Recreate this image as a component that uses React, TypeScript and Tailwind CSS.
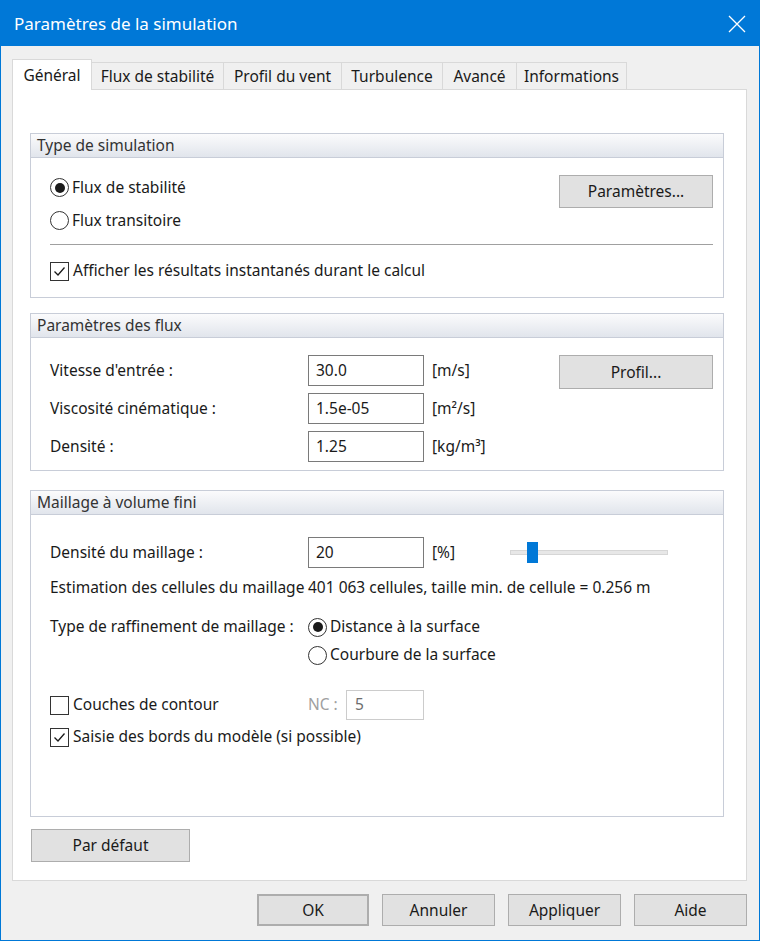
import { ReactNode } from "react";

function Radio({ checked, label }: { checked?: boolean; label: string }) {
  return (
    <div className="flex items-center gap-[3px]">
      <span className="w-[19px] h-[19px] rounded-full border border-[#333] flex items-center justify-center bg-white">
        {checked && <span className="w-[10px] h-[10px] rounded-full bg-[#1a1a1a]" />}
      </span>
      <span>{label}</span>
    </div>
  );
}

function Check({ checked, label }: { checked?: boolean; label: string }) {
  return (
    <div className="flex items-center gap-[4px]">
      <span className="w-[19px] h-[19px] border border-[#333] bg-white flex items-center justify-center">
        {checked && (
          <svg width="15" height="15" viewBox="0 0 15 15">
            <path d="M2.5 7.5 L6 11 L12.5 3.5" fill="none" stroke="#1a1a1a" strokeWidth="1.3" />
          </svg>
        )}
      </span>
      <span>{label}</span>
    </div>
  );
}

function Btn({ children, className = "" }: { children: ReactNode; className?: string }) {
  return (
    <button className={"bg-[#e1e1e1] border border-[#adadad] text-[#1a1a1a] flex items-center justify-center pt-px " + className}>
      {children}
    </button>
  );
}

function Group({ title, children, className = "" }: { title: string; children: ReactNode; className?: string }) {
  return (
    <div className={"border border-[#c8cdd8] " + className}>
      <div className="h-[24px] bg-gradient-to-b from-[#fbfbfc] to-[#e1e5ec] border-b border-[#c8cdd8] pl-[6px] leading-[23px] text-[#333]">
        {title}
      </div>
      {children}
    </div>
  );
}

function Field({ value }: { value: string }) {
  return (
    <div className="w-[116px] h-[31px] border border-[#7a7a7a] bg-white pl-[7px] flex items-center">{value}</div>
  );
}

const tabs = [
  { name: "Général", w: "w-[80px]" },
  { name: "Flux de stabilité", w: "w-[133px]" },
  { name: "Profil du vent", w: "w-[119px]" },
  { name: "Turbulence", w: "w-[102px]" },
  { name: "Avancé", w: "w-[75px]" },
  { name: "Informations", w: "w-[111px]" },
];

export default function App() {
  return (
    <div
      className="w-[760px] h-[941px] border border-[#0078d7] bg-[#f0f0f0] flex flex-col text-[15.5px] text-[#1a1a1a]"
      style={{ fontFamily: '"Noto Sans", sans-serif' }}
    >
      <div className="h-[46px] bg-[#0078d7] text-white text-[17px] flex items-center justify-between pl-[13px] pr-[13px]">
        <span>Paramètres de la simulation</span>
        <svg width="18" height="18" viewBox="0 0 18 18">
          <path d="M1 1 L17 17 M17 1 L1 17" stroke="white" strokeWidth="1.3" />
        </svg>
      </div>

      <div className="flex-1 flex flex-col pl-[11px] pr-[12px] pt-[13px] pb-[14px]">
        <div className="flex items-end h-[30px]">
          {tabs.map((t, i) =>
            i === 0 ? (
              <div
                key={t.name}
                className={t.w + " h-[31px] bg-white border border-[#d9d9d9] border-b-0 flex items-center justify-center pt-[2px] relative z-10 -mb-px"}
              >
                {t.name}
              </div>
            ) : (
              <div
                key={t.name}
                className={t.w + " h-[27px] bg-[#f0f0f0] border border-[#d9d9d9] border-b-0 -ml-px flex items-center justify-center pt-[2px]"}
              >
                {t.name}
              </div>
            )
          )}
        </div>

        <div className="h-[792px] bg-white border border-[#d9d9d9] pl-[17px] pr-[22px] pt-[43px] flex flex-col">
          <Group title="Type de simulation">
            <div className="pl-[19px] pr-[10px] pt-[13px] pb-[13px]">
              <div className="flex justify-between items-start">
                <div className="flex flex-col">
                  <div className="h-[33px] flex items-center">
                    <Radio checked label="Flux de stabilité" />
                  </div>
                  <div className="h-[33px] flex items-center">
                    <Radio label="Flux transitoire" />
                  </div>
                </div>
                <Btn className="w-[154px] h-[33px] mt-[4px]">Paramètres...</Btn>
              </div>
              <div className="h-px bg-[#a0a0a0] mt-[7px]" />
              <div className="h-[26px] mt-[13px] flex items-center">
                <Check checked label="Afficher les résultats instantanés durant le calcul" />
              </div>
            </div>
          </Group>

          <Group title="Paramètres des flux" className="mt-[15px]">
            <div className="pl-[19px] pr-[10px] pt-[17px] pb-[8px] flex justify-between items-start">
              <div className="flex flex-col gap-[7px]">
                {[
                  ["Vitesse d'entrée :", "30.0", "[m/s]"],
                  ["Viscosité cinématique :", "1.5e-05", "[m²/s]"],
                  ["Densité :", "1.25", "[kg/m³]"],
                ].map(([l, v, u]) => (
                  <div key={l} className="flex items-center">
                    <span className="w-[258px]">{l}</span>
                    <Field value={v} />
                    <span className="ml-[8px]">{u}</span>
                  </div>
                ))}
              </div>
              <Btn className="w-[154px] h-[34px]">Profil...</Btn>
            </div>
          </Group>

          <Group title="Maillage à volume fini" className="mt-[19px] h-[327px]">
            <div className="pl-[19px] pr-[10px] pt-[22px]">
              <div className="flex items-center">
                <span className="w-[258px]">Densité du maillage :</span>
                <Field value="20" />
                <span className="ml-[8px] w-[78px]">[%]</span>
                <div className="w-[158px] h-[5px] bg-[#e7e7e7] border border-[#d6d6d6] relative">
                  <div className="absolute left-[16px] top-[-9px] w-[11px] h-[21px] bg-[#0078d7]" />
                </div>
              </div>
              <div className="h-[22px] mt-[9px] flex items-center">
                <span className="w-[258px] whitespace-nowrap">Estimation des cellules du maillage</span>
                <span>401 063 cellules, taille min. de cellule = 0.256 m</span>
              </div>
              <div className="flex mt-[14px]">
                <span className="w-[258px] h-[28px] flex items-center">Type de raffinement de maillage :</span>
                <div className="flex flex-col">
                  <div className="h-[28px] flex items-center">
                    <Radio checked label="Distance à la surface" />
                  </div>
                  <div className="h-[28px] flex items-center">
                    <Radio label="Courbure de la surface" />
                  </div>
                </div>
              </div>
              <div className="flex items-center mt-[21px] h-[30px]">
                <div className="w-[258px]">
                  <Check label="Couches de contour" />
                </div>
                <span className="text-[#a0a0a0] w-[38px]">NC :</span>
                <div className="w-[78px] h-[30px] border border-[#cccccc] pl-[8px] flex items-center text-[#6d6d6d]">5</div>
              </div>
              <div className="h-[22px] mt-[6px] flex items-center">
                <Check checked label="Saisie des bords du modèle (si possible)" />
              </div>
            </div>
          </Group>

          <Btn className="w-[159px] h-[33px] mt-[12px] ml-px">Par défaut</Btn>
        </div>

        <div className="flex justify-end gap-[13px] mt-[13px]">
          <Btn className="w-[112px] h-[32px] border-2 border-[#0078d7]">OK</Btn>
          <Btn className="w-[113px] h-[32px]">Annuler</Btn>
          <Btn className="w-[113px] h-[32px]">Appliquer</Btn>
          <Btn className="w-[113px] h-[32px]">Aide</Btn>
        </div>
      </div>
    </div>
  );
}
